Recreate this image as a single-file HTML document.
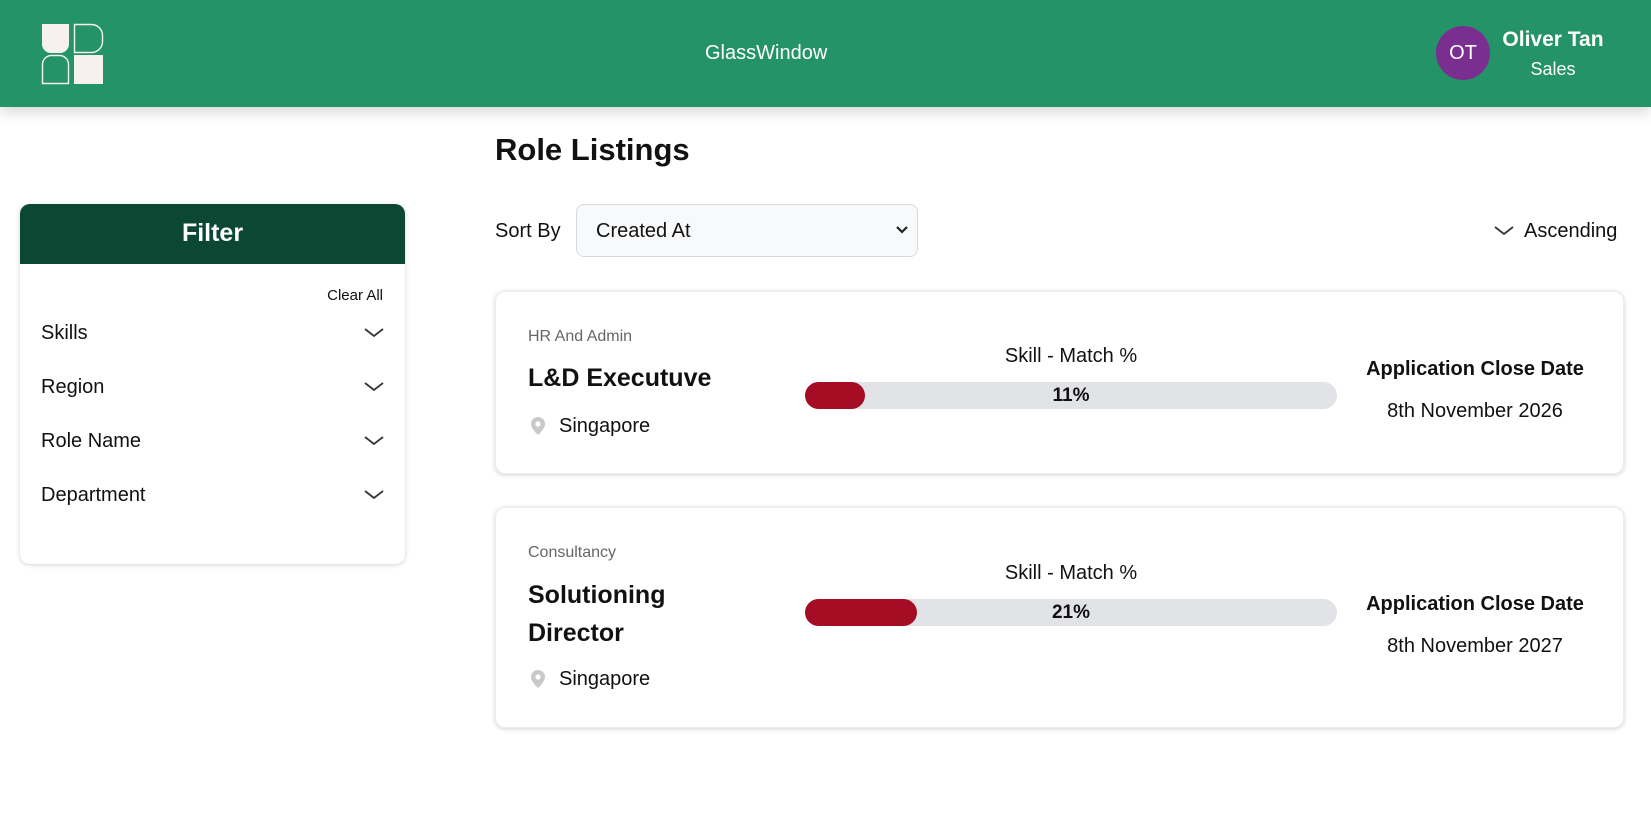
<!DOCTYPE html>
<html><head><meta charset="utf-8"><style>
*{margin:0;padding:0;box-sizing:border-box}
body{width:1651px;height:815px;background:#fff;font-family:"Liberation Sans",Arial,sans-serif;color:#111;position:relative;overflow:hidden}
.a{position:absolute;white-space:nowrap}
.hdr{position:absolute;left:0;top:0;width:1651px;height:107px;background:#249367;box-shadow:0 4px 14px rgba(0,0,0,.18)}
.card{position:absolute;background:#fff;border-radius:10px;box-shadow:0 1px 5px rgba(0,0,0,.18);border:1px solid #ececec}
.bar{position:absolute;left:805px;width:532px;height:27px;border-radius:14px;background:#e2e3e6}
.fill{position:absolute;left:0;top:0;height:27px;border-radius:14px;background:#a50d24}
.pct{position:absolute;left:0;width:532px;top:0;line-height:27px;text-align:center;font-weight:bold;font-size:19px}
</style></head><body>
<div class="hdr">
<svg class="a" style="left:41px;top:22px" width="64" height="63" viewBox="0 0 64 63">
<path d="M1 2h27v20a9 9 0 0 1-9 9h-9a9 9 0 0 1-9-9z" fill="#f6f1ee"/>
<path d="M33.5 2.5h17a11 11 0 0 1 11 11v6a11 11 0 0 1-11 11h-17z" fill="none" stroke="#f6f1ee" stroke-width="1.4"/>
<path d="M1.5 61.5v-19a9 9 0 0 1 9-9h8a9 9 0 0 1 9 9v19z" fill="none" stroke="#f6f1ee" stroke-width="1.4"/>
<rect x="33" y="33" width="29" height="29" fill="#f6f1ee"/>
</svg>
<div class="a" style="left:705px;top:42px;font-size:20px;color:#fff">GlassWindow</div>
<div class="a" style="left:1436px;top:26px;width:54px;height:54px;border-radius:50%;background:#7a2e8f;color:#fff;font-size:20px;line-height:54px;text-align:center">OT</div>
<div class="a" style="left:1500px;top:28px;width:106px;text-align:center;color:#fff;font-weight:bold;font-size:21px">Oliver Tan</div>
<div class="a" style="left:1500px;top:59px;width:106px;text-align:center;color:#fff;font-size:18px">Sales</div>
</div>

<div class="card" style="left:20px;top:204px;width:385px;height:360px;overflow:hidden;border:none">
<div style="height:60px;background:#0b4733;color:#fff;font-weight:bold;font-size:25px;text-align:center;line-height:58px">Filter</div>
<div class="a" style="right:22px;top:83px;font-size:15px">Clear All</div>
<div class="a" style="left:21px;top:118px;font-size:20px">Skills</div>
<div class="a" style="left:21px;top:172px;font-size:20px">Region</div>
<div class="a" style="left:21px;top:226px;font-size:20px">Role Name</div>
<div class="a" style="left:21px;top:280px;font-size:20px">Department</div>
<svg class="a" style="left:344px;top:124px" width="20" height="10"><polyline points="1,1 10,8 19,1" fill="none" stroke="#333" stroke-width="1.8"/></svg>
<svg class="a" style="left:344px;top:178px" width="20" height="10"><polyline points="1,1 10,8 19,1" fill="none" stroke="#333" stroke-width="1.8"/></svg>
<svg class="a" style="left:344px;top:232px" width="20" height="10"><polyline points="1,1 10,8 19,1" fill="none" stroke="#333" stroke-width="1.8"/></svg>
<svg class="a" style="left:344px;top:286px" width="20" height="10"><polyline points="1,1 10,8 19,1" fill="none" stroke="#333" stroke-width="1.8"/></svg>
</div>

<div class="a" style="left:495px;top:132px;font-size:31px;font-weight:bold">Role Listings</div>
<div class="a" style="left:495px;top:220px;font-size:20px">Sort By</div>
<div class="a" style="left:576px;top:204px;width:342px;height:53px;border:1px solid #d6d9de;border-radius:8px;background:#f8f9fb"></div>
<div class="a" style="left:596px;top:220px;font-size:20px">Created At</div>
<svg class="a" style="left:896px;top:226px" width="12" height="8"><polyline points="1,1 6,6 11,1" fill="none" stroke="#222" stroke-width="2.2"/></svg>
<svg class="a" style="left:1494px;top:226px" width="20" height="10"><polyline points="1,1 10,8 19,1" fill="none" stroke="#333" stroke-width="1.8"/></svg>
<div class="a" style="left:1524px;top:220px;font-size:20px">Ascending</div>

<div class="card" style="left:495px;top:291px;width:1129px;height:183px"></div>
<div class="a" style="left:528px;top:328px;font-size:16px;color:#666">HR And Admin</div>
<div class="a" style="left:528px;top:364px;font-size:25px;font-weight:bold">L&amp;D Executuve</div>
<svg class="a" style="left:529px;top:416px" width="18" height="20" viewBox="0 0 18 20"><path d="M9 1a7 7 0 0 0-7 7c0 5 7 11 7 11s7-6 7-11a7 7 0 0 0-7-7z" fill="#c9c9c9"/><circle cx="9" cy="8" r="2.6" fill="#fff"/></svg>
<div class="a" style="left:559px;top:415px;font-size:20px">Singapore</div>
<div class="a" style="left:805px;top:345px;width:532px;text-align:center;font-size:20px">Skill - Match %</div>
<div class="bar" style="top:382px"><div class="fill" style="width:60px"></div><div class="pct">11%</div></div>
<div class="a" style="left:1325px;top:358px;width:300px;text-align:center;font-size:20px;font-weight:bold">Application Close Date</div>
<div class="a" style="left:1325px;top:400px;width:300px;text-align:center;font-size:20px">8th November 2026</div>

<div class="card" style="left:495px;top:507px;width:1129px;height:221px"></div>
<div class="a" style="left:528px;top:544px;font-size:16px;color:#666">Consultancy</div>
<div class="a" style="left:528px;top:581px;font-size:25px;font-weight:bold">Solutioning</div>
<div class="a" style="left:528px;top:619px;font-size:25px;font-weight:bold">Director</div>
<svg class="a" style="left:529px;top:669px" width="18" height="20" viewBox="0 0 18 20"><path d="M9 1a7 7 0 0 0-7 7c0 5 7 11 7 11s7-6 7-11a7 7 0 0 0-7-7z" fill="#c9c9c9"/><circle cx="9" cy="8" r="2.6" fill="#fff"/></svg>
<div class="a" style="left:559px;top:668px;font-size:20px">Singapore</div>
<div class="a" style="left:805px;top:562px;width:532px;text-align:center;font-size:20px">Skill - Match %</div>
<div class="bar" style="top:599px"><div class="fill" style="width:112px"></div><div class="pct">21%</div></div>
<div class="a" style="left:1325px;top:593px;width:300px;text-align:center;font-size:20px;font-weight:bold">Application Close Date</div>
<div class="a" style="left:1325px;top:635px;width:300px;text-align:center;font-size:20px">8th November 2027</div>
</body></html>
